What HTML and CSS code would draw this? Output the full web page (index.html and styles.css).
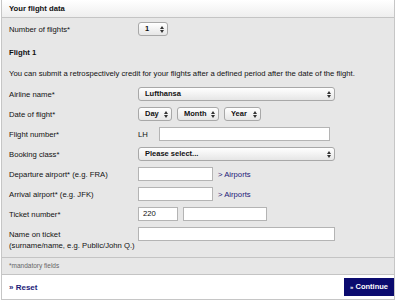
FILE: index.html
```html
<!DOCTYPE html>
<html>
<head>
<meta charset="utf-8">
<link rel="stylesheet" href="styles.css">
</head>
<body>
<div class="panel">
  <div class="head">Your flight data</div>
  <div class="body">
    <div class="row first">
      <div class="label">Number of flights*</div>
      <div class="field"><span class="sel w-num">1<i class="arr"></i></span></div>
    </div>
    <div class="subhead">Flight 1</div>
    <div class="intro">You can submit a retrospectively credit for your flights after a defined period after the date of the flight.</div>
    <div class="row">
      <div class="label">Airline name*</div>
      <div class="field"><span class="sel w-wide">Lufthansa<i class="arr"></i></span></div>
    </div>
    <div class="row">
      <div class="label">Date of flight*</div>
      <div class="field">
        <span class="sel w-day">Day<i class="arr"></i></span>
        <span class="sel w-month">Month<i class="arr"></i></span>
        <span class="sel w-year">Year<i class="arr"></i></span>
      </div>
    </div>
    <div class="row">
      <div class="label">Flight number*</div>
      <div class="field"><span class="prefix">LH</span><span class="inp w-flight"></span></div>
    </div>
    <div class="row">
      <div class="label">Booking class*</div>
      <div class="field"><span class="sel w-wide">Please select...<i class="arr"></i></span></div>
    </div>
    <div class="row">
      <div class="label">Departure airport* (e.g. FRA)</div>
      <div class="field"><span class="inp w-air"></span><a class="link">&gt; Airports</a></div>
    </div>
    <div class="row">
      <div class="label">Arrival airport* (e.g. JFK)</div>
      <div class="field"><span class="inp w-air"></span><a class="link">&gt; Airports</a></div>
    </div>
    <div class="row">
      <div class="label">Ticket number*</div>
      <div class="field"><span class="inp w-t1">220</span><span class="inp w-t2"></span></div>
    </div>
    <div class="row last">
      <div class="label">Name on ticket<br>(surname/name, e.g. Public/John Q.)</div>
      <div class="field"><span class="inp w-name"></span></div>
    </div>
  </div>
  <div class="note">*mandatory fields</div>
  <div class="foot">
    <a class="reset"><b>»</b> Reset</a>
    <a class="btn"><span class="raq">»</span> Continue</a>
  </div>
</div>
</body>
</html>
```
FILE: styles.css
```css
html, body { margin: 0; padding: 0; background: #ffffff; }
body { font-family: "Liberation Sans", Arial, sans-serif; font-size: 7.7px; color: #111; }
.panel { width: 392px; margin-left: 1px; border: 1px solid #c6c6c6; border-top: none; }
.head { height: 17px; line-height: 17px; padding-left: 7px; font-weight: bold; background: linear-gradient(#ffffff, #eeeeee); border-bottom: 1px solid #c4c4c4; }
.body { background: #e7e7e7; padding: 4px 0 2px 7px; }
.row { display: flex; align-items: flex-start; height: 20px; }
.row.first { height: 22px; }
.row.last { height: 28px; }
.label { width: 129px; flex: none; padding-top: 2px; line-height: 11px; white-space: nowrap; }
.field { display: flex; align-items: center; gap: 5px; }
.subhead { font-weight: bold; margin-top: 4px; height: 21px; line-height: 10px; }
.intro { height: 18px; line-height: 10px; }
.sel { position: relative; display: inline-block; box-sizing: border-box; height: 14px; line-height: 12px; padding-left: 6px; border: 1px solid #a8a8a8; border-radius: 3px; background: linear-gradient(#ffffff, #e6e6e6); font-weight: bold; font-size: 7.5px; }
.arr { position: absolute; right: 5px; top: 3px; width: 0; height: 0; }
.arr::before, .arr::after { content: ""; position: absolute; left: -2px; border-left: 2px solid transparent; border-right: 2px solid transparent; }
.arr::before { top: 0; border-bottom: 3px solid #333; }
.arr::after { top: 4px; border-top: 3px solid #333; }
.w-num { width: 30px; }
.w-wide { width: 197px; }
.w-day { width: 34px; }
.w-month { width: 42px; }
.w-year { width: 37px; }
.inp { display: inline-block; box-sizing: border-box; height: 14px; line-height: 12px; padding-left: 4px; background: #fff; border: 1px solid #b4b4b4; }
.prefix { width: 16px; font-weight: normal; }
.w-flight { width: 171px; }
.w-air { width: 75px; }
.w-t1 { width: 40px; }
.w-t2 { width: 84px; }
.w-name { width: 197px; }
.link { color: #1c1a78; text-decoration: none; }
.note { background: #e7e7e7; border-top: 1px solid #c4c4c4; height: 16px; line-height: 16px; padding-left: 7px; font-size: 6.5px; color: #666; }
.foot { display: flex; justify-content: space-between; align-items: center; height: 24px; padding: 0 0 0 7px; border-top: 1px solid #c4c4c4; background: #fff; }
.reset { color: #1c1a78; font-weight: bold; font-size: 8px; }
.btn { background: #0b0b6f; color: #fff; font-weight: bold; font-size: 7.5px; height: 18px; line-height: 18px; padding: 0 6px 0 6px; }
.raq { font-size: 6px; }
```
